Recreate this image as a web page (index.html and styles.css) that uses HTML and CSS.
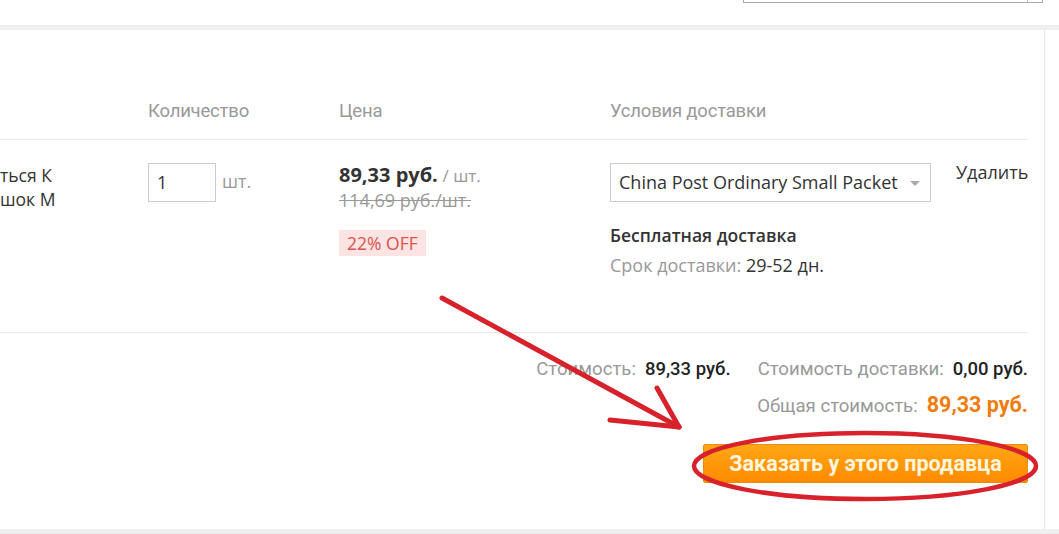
FILE: index.html
```html
<!DOCTYPE html>
<html lang="ru">
<head>
<meta charset="utf-8">
<title>Корзина</title>
<link rel="stylesheet" href="styles.css">
</head>
<body>
<div class="topbar">
  <div class="search"><div class="search-btn"></div></div>
</div>
<div class="band"></div>
<div class="card">
  <div class="table">
    <div class="thead">
      <div class="th"></div>
      <div class="th">Количество</div>
      <div class="th">Цена</div>
      <div class="th">Условия доставки</div>
      <div class="th"></div>
    </div>
    <div class="trow">
      <div class="product">ться К<br>шок М</div>
      <div class="qty">
        <div class="qty-input">1</div>
        <span class="unit">шт.</span>
      </div>
      <div class="price">
        <div class="price-now"><b>89,33 руб.</b> <span class="per">/ шт.</span></div>
        <div class="price-old">114,69 руб./шт.</div>
        <span class="off">22% OFF</span>
      </div>
      <div class="ship">
        <div class="select">China Post Ordinary Small Packet<span class="caret"></span></div>
        <div class="free">Бесплатная доставка</div>
        <div class="term">Срок доставки: <span class="days">29-52 дн.</span></div>
      </div>
      <div class="del">Удалить</div>
    </div>
    <div class="totals">
      <div class="tline">
        <span class="lbl">Стоимость:</span><span class="val">89,33 руб.</span>
        <span class="lbl gap">Стоимость доставки:</span><span class="val">0,00 руб.</span>
      </div>
      <div class="tline">
        <span class="lbl">Общая стоимость:</span><span class="val total">89,33 руб.</span>
      </div>
      <div class="btnline">
        <button class="order">Заказать у этого продавца</button>
      </div>
    </div>
  </div>
</div>
<div class="band"></div>
<svg class="annot" width="1059" height="534" viewBox="0 0 1059 534">
  <g fill="none" stroke="#d8222b" stroke-width="5" stroke-linecap="round">
    <path d="M442 298 L679 427"/>
    <path d="M657 388 L679 427"/>
    <path d="M610 420 L679 427"/>
    <ellipse cx="865" cy="466" rx="171" ry="33" stroke-width="4.5"/>
  </g>
</svg>
</body>
</html>
```
FILE: styles.css
```css
html, body {
  margin: 0;
  padding: 0;
  background: #ffffff;
}
body {
  font-family: "Open Sans", "Liberation Sans", sans-serif;
  color: #333;
  width: 1059px;
  height: 534px;
  overflow: hidden;
  position: relative;
}
.topbar {
  height: 25px;
  display: flex;
  justify-content: flex-end;
  padding-right: 16px;
  box-sizing: border-box;
}
.search {
  width: 298px;
  height: 20px;
  margin-top: -19px;
  border: 1px solid #aaa;
  display: flex;
  justify-content: flex-end;
}
.search-btn {
  width: 14px;
  border-left: 1px solid #bbb;
}
.band {
  height: 5px;
  background: #efefef;
}
.card {
  width: 1045px;
  height: 499px;
  border-right: 1px solid #e6e6e6;
  background: #fff;
  box-sizing: border-box;
}
.table {
  width: 1028px;
}
.thead, .trow {
  display: grid;
  grid-template-columns: 148px 191px 271px 346px 72px;
}
.thead {
  padding-top: 69px;
  height: 110px;
  box-sizing: border-box;
  border-bottom: 1px solid #e8e8e8;
}
.th {
  font-family: Roboto, "Liberation Sans", sans-serif;
  font-size: 18.5px;
  color: #999;
  line-height: 24px;
  letter-spacing: -0.2px;
}
.trow {
  height: 193px;
  box-sizing: border-box;
  padding-top: 23px;
  border-bottom: 1px solid #e8e8e8;
  font-size: 18px;
}
.product {
  font-size: 17.5px;
  line-height: 24px;
  color: #333;
}
.qty {
  display: flex;
  align-items: flex-start;
}
.qty-input {
  width: 68px;
  height: 39px;
  border: 1px solid #ccc;
  box-sizing: border-box;
  padding-left: 8px;
  font-size: 18px;
  line-height: 36px;
  color: #333;
}
.unit {
  margin-left: 6px;
  color: #999;
  line-height: 36px;
}
.price-now {
  line-height: 24px;
  white-space: nowrap;
}
.price-now b {
  font-size: 20px;
  color: #333;
}
.per {
  color: #999;
  font-size: 17px;
}
.price-old {
  color: #999;
  text-decoration: line-through;
  font-size: 18px;
  line-height: 24px;
}
.off {
  display: inline-block;
  margin-top: 18px;
  background: #fde3e1;
  color: #d9534f;
  font-size: 17.5px;
  padding: 0 8px;
  line-height: 26px;
}
.select {
  width: 321px;
  height: 39px;
  border: 1px solid #ccc;
  box-sizing: border-box;
  padding-left: 8px;
  font-size: 18px;
  line-height: 36px;
  color: #333;
  position: relative;
  white-space: nowrap;
}
.caret {
  position: absolute;
  right: 10px;
  top: 17px;
  border-left: 5px solid transparent;
  border-right: 5px solid transparent;
  border-top: 5px solid #aaa;
}
.free {
  margin-top: 21px;
  font-weight: 600;
  font-size: 17.5px;
  color: #333;
  line-height: 24px;
}
.term {
  margin-top: 6px;
  color: #999;
  line-height: 24px;
  white-space: nowrap;
}
.days {
  color: #333;
}
.del {
  font-size: 18px;
  line-height: 18px;
  color: #333;
  white-space: nowrap;
}
.totals {
  padding-top: 25px;
  font-family: Roboto, "Liberation Sans", sans-serif;
  font-size: 18.6px;
}
.tline {
  display: flex;
  justify-content: flex-end;
  align-items: baseline;
  height: 36px;
  line-height: 22px;
}
.lbl {
  color: #999;
}
.lbl.gap {
  margin-left: 27px;
}
.val {
  margin-left: 9px;
  color: #222;
  font-weight: 500;
  font-size: 18.5px;
}
.val.total {
  color: #f07c10;
  font-size: 21.5px;
  font-weight: 700;
}
.btnline {
  display: flex;
  justify-content: flex-end;
  margin-top: 14px;
}
.order {
  width: 325px;
  height: 39px;
  border: 1px solid #e8900c;
  border-radius: 2px;
  background: linear-gradient(#ffa616, #ff8a00);
  color: #fff6dc;
  font-family: Roboto, "Liberation Sans", sans-serif;
  font-weight: 700;
  font-size: 21.5px;
  padding: 0;
}
.annot {
  position: absolute;
  left: 0;
  top: 0;
  pointer-events: none;
}
```
